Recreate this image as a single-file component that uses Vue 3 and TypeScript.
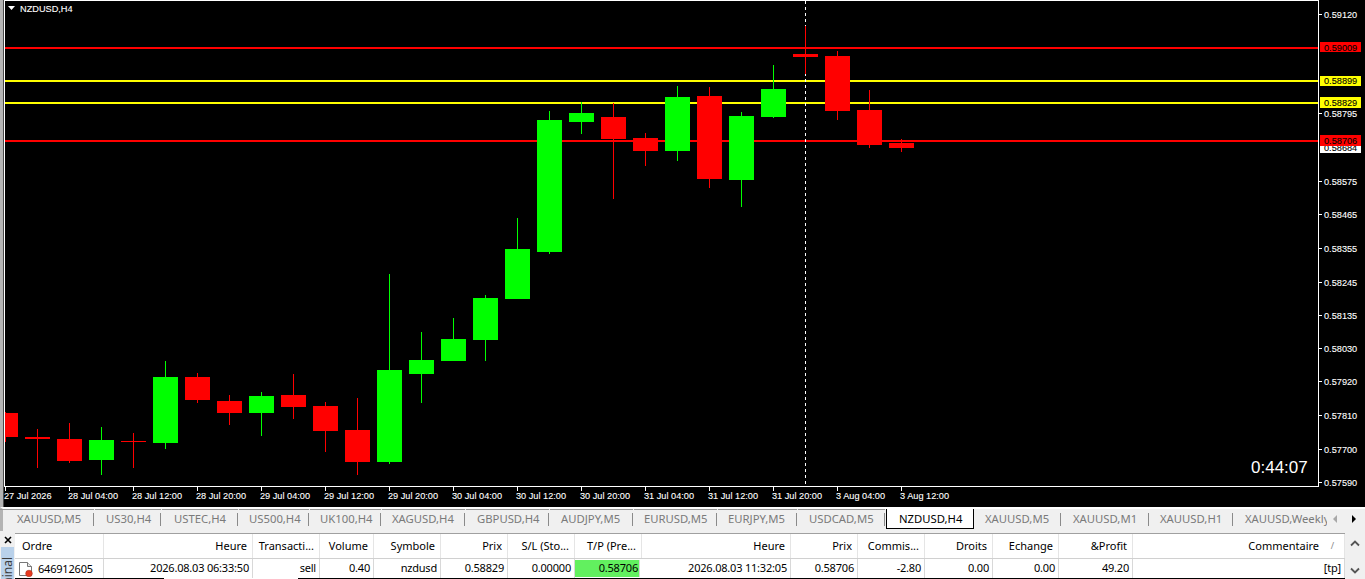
<script setup lang="ts">
interface Candle { x: number; top: number; bottom: number; high: number; low: number; up: boolean }
const raw: [number, number, number, number, boolean][] = [
  [413, 437, 412, 442, false], [437, 439, 429, 468, false], [439, 461, 423, 463, false], [440, 460, 427, 475, true],
  [441, 442, 433, 468, false], [377, 443, 361, 449, true], [377, 400, 373, 403, false], [401, 413, 395, 425, false],
  [396, 413, 392, 436, true], [395, 407, 374, 419, false], [406, 431, 402, 452, false], [430, 462, 398, 475, false],
  [370, 462, 274, 464, true], [360, 374, 332, 403, true], [339, 361, 318, 361, true], [298, 340, 295, 361, true],
  [249, 299, 218, 299, true], [120, 252, 111, 254, true], [113, 122, 102, 134, true], [117, 139, 103, 199, false],
  [138, 151, 133, 166, false], [97, 151, 86, 161, true], [96, 179, 87, 188, false], [116, 180, 112, 207, true],
  [89, 117, 65, 118, true], [54, 57, 26, 74, false], [56, 111, 51, 120, false], [110, 145, 90, 148, false],
  [143, 148, 139, 152, false],
]
const candles: Candle[] = raw.map((c, i) => ({ x: 5 + i * 32, top: c[0], bottom: c[1], high: c[2], low: c[3], up: c[4] }))

const hLines = [
  { y: 47, color: '#ff0000' }, { y: 80, color: '#ffff00' }, { y: 102, color: '#ffff00' }, { y: 140, color: '#ff0000' },
]
const priceTicks = [
  ['0.59120', 14], ['0.58795', 113], ['0.58575', 181], ['0.58465', 214], ['0.58355', 248], ['0.58245', 282],
  ['0.58135', 315], ['0.58030', 348], ['0.57920', 381], ['0.57810', 415], ['0.57700', 449], ['0.57590', 482],
] as [string, number][]
const priceTags = [
  { t: '0.58684', y: 146, h: 7, ty: 147, bg: '#ffffff' },
  { t: '0.59009', y: 42, h: 10, ty: 47, bg: '#ff0000' },
  { t: '0.58899', y: 76, h: 10, ty: 80, bg: '#ffff00' },
  { t: '0.58829', y: 97, h: 11, ty: 102, bg: '#ffff00' },
  { t: '0.58706', y: 135, h: 11, ty: 140, bg: '#ff0000' },
]
const times = ['27 Jul 2026', '28 Jul 04:00', '28 Jul 12:00', '28 Jul 20:00', '29 Jul 04:00', '29 Jul 12:00', '29 Jul 20:00',
  '30 Jul 04:00', '30 Jul 12:00', '30 Jul 20:00', '31 Jul 04:00', '31 Jul 12:00', '31 Jul 20:00', '3 Aug 04:00', '3 Aug 12:00']

const tabs = [
  { t: 'XAUUSD,M5', w: 95, pad: 17 }, { t: 'US30,H4', w: 67, pad: 11 }, { t: 'USTEC,H4', w: 77, pad: 12 },
  { t: 'US500,H4', w: 71, pad: 10 }, { t: 'UK100,H4', w: 72, pad: 10 }, { t: 'XAGUSD,H4', w: 84, pad: 10 },
  { t: 'GBPUSD,H4', w: 84, pad: 11 }, { t: 'AUDJPY,M5', w: 84, pad: 11 }, { t: 'EURUSD,M5', w: 84, pad: 10 },
  { t: 'EURJPY,M5', w: 80, pad: 10 }, { t: 'USDCAD,M5', w: 88, pad: 11 }, { t: 'NZDUSD,H4', w: 88, pad: 12, active: true },
  { t: 'XAUUSD,M5', w: 88, pad: 11 }, { t: 'XAUUSD,M1', w: 88, pad: 11 }, { t: 'XAUUSD,H1', w: 84, pad: 10 },
  { t: 'XAUUSD,Weekly', w: 94, pad: 11, last: true },
]
const activeIndex = tabs.findIndex(t => t.active)

const cols = [
  { h: 'Ordre', v: '646912605', w: 89, left: true },
  { h: 'Heure', v: '2026.08.03 06:33:50', w: 149 },
  { h: 'Transacti...', v: 'sell', w: 67 },
  { h: 'Volume', v: '0.40', w: 54 },
  { h: 'Symbole', v: 'nzdusd', w: 67 },
  { h: 'Prix', v: '0.58829', w: 67 },
  { h: 'S/L (Sto...', v: '0.00000', w: 67 },
  { h: 'T/P (Pre...', v: '0.58706', w: 67, green: true },
  { h: 'Heure', v: '2026.08.03 11:32:05', w: 149 },
  { h: 'Prix', v: '0.58706', w: 67 },
  { h: 'Commis...', v: '-2.80', w: 67 },
  { h: 'Droits', v: '0.00', w: 68 },
  { h: 'Echange', v: '0.00', w: 66 },
  { h: '&Profit', v: '49.20', w: 74 },
  { h: 'Commentaire', v: '[tp]', w: 212, sort: true },
]
const gridCols = cols.map(c => c.w + 'px').join(' ')
</script>

<template>
  <div class="screen">
    <div class="chart-wrap">
      <svg class="chart" width="1365" height="507" viewBox="0 0 1365 507" shape-rendering="crispEdges">
        <rect x="0" y="0" width="3" height="507" fill="#b4b4b4" />
        <rect x="3" y="0" width="1" height="507" fill="#4a4a4a" />
        <rect x="4.5" y="0.5" width="1314" height="486" fill="none" stroke="#ffffff" />

        <rect v-for="l in hLines" :key="l.y" x="5" :y="l.y" width="1313" height="2" :fill="l.color" />
        <line x1="805.5" y1="1" x2="805.5" y2="486" stroke="#ffffff" stroke-dasharray="3 3" />

        <g v-for="c in candles" :key="c.x">
          <rect :x="c.x" :y="c.high" width="1" :height="c.low - c.high" :fill="c.up ? '#00ff00' : '#ff0000'" />
          <rect :x="Math.max(c.x - 12, 5)" :y="c.top" :width="c.x - 12 < 5 ? 13 : 25" :height="c.bottom - c.top"
            :fill="c.up ? '#00ff00' : '#ff0000'" />
        </g>

        <path d="M8 6h7l-3.5 4z" fill="#ffffff" shape-rendering="auto" />
        <text class="lbl" x="20" y="12">NZDUSD,H4</text>

        <g v-for="p in priceTicks" :key="p[0]">
          <rect x="1319" :y="p[1]" width="3" height="1" fill="#ffffff" />
          <text class="lbl" x="1324" :y="p[1] + 4">{{ p[0] }}</text>
        </g>
        <g v-for="p in priceTags" :key="p.t">
          <rect x="1320" :y="p.y" width="41" :height="p.h" :fill="p.bg" />
          <text class="lbl dark" x="1324" :y="p.ty + 4">{{ p.t }}</text>
        </g>

        <g v-for="(t, i) in times" :key="t">
          <rect :x="5 + i * 64" y="487" width="1" height="4" fill="#ffffff" />
          <text class="lbl" :x="(i === 0 ? 4 : 4 + i * 64)" y="499">{{ t }}</text>
        </g>

        <text class="clock" x="1251" y="473">0:44:07</text>
      </svg>
    </div>

    <div class="tabbar">
      <div v-for="(t, i) in tabs" :key="i" class="tab"
        :class="{ active: t.active, last: t.last, before: i < activeIndex }"
        :style="{ width: t.w + 'px', paddingLeft: t.pad + 'px' }">{{ t.t }}</div>
      <div class="tab-arrows">
        <svg width="30" height="10" viewBox="0 0 30 10">
          <path d="M5 1v8l-4-4z" fill="#a8a8a8" />
          <path d="M20 1v8l4-4z" fill="#000000" />
        </svg>
      </div>
    </div>

    <div class="panel">
      <div class="side">
        <svg class="close" width="8" height="8" viewBox="0 0 8 8">
          <path d="M1 1l6 6M7 1l-6 6" stroke="#000" stroke-width="1.6" />
        </svg>
        <div class="vtab"><span>Terminal</span></div>
      </div>
      <div class="table">
        <div class="thead" :style="{ gridTemplateColumns: gridCols }">
          <div v-for="(c, i) in cols" :key="i" class="th" :class="{ left: c.left, sortable: c.sort }">
            {{ c.h }}<span v-if="c.sort" class="sort">/</span>
          </div>
        </div>
        <div class="trow" :style="{ gridTemplateColumns: gridCols }">
          <div v-for="(c, i) in cols" :key="i" class="td" :class="{ left: c.left, green: c.green }">
            <svg v-if="c.left" class="doc" width="16" height="16" viewBox="0 0 16 16">
              <path d="M1.5 1.5h8l4 4v9h-12z" fill="#fff" stroke="#777" shape-rendering="auto" />
              <path d="M9.5 1.5v4h4" fill="#e8e8e8" stroke="#777" shape-rendering="auto" />
              <circle cx="11" cy="12.5" r="3.3" fill="#e8391f" stroke="#a32" stroke-width=".6" />
            </svg>
            <span>{{ c.v }}</span>
          </div>
        </div>
        <div class="row-gap"></div>
      </div>
      <div class="scroll">
        <svg width="10" height="7" viewBox="0 0 10 7"><path d="M1 5.5l4-4 4 4" fill="none" stroke="#555" stroke-width="1.8" /></svg>
        <svg width="10" height="7" viewBox="0 0 10 7"><path d="M1 1.5l4 4 4-4" fill="none" stroke="#555" stroke-width="1.8" /></svg>
      </div>
    </div>
  </div>
</template>

<style>
html, body { margin: 0; padding: 0; background: #f0f0f0; overflow: hidden; }
</style>

<style scoped>
.screen {
  width: 1365px;
  height: 579px;
  display: flex;
  flex-direction: column;
  overflow: hidden;
  background: #f0f0f0;
  font-family: "Noto Sans", sans-serif;
  font-size: 11px;
  color: #000;
}
.chart-wrap { height: 507px; background: #000; flex: none; }
.chart { display: block; }
.lbl { font-family: "Liberation Sans", sans-serif; font-size: 9.2px; fill: #fff; stroke: #fff; stroke-width: 0.1px; }
.lbl.dark { fill: #000; stroke: #000; }
.clock { font-family: "Liberation Sans", sans-serif; font-size: 17px; fill: #fff; }

.tabbar {
  flex: none;
  display: flex;
  background: #f0f0f0;
  border-top: 2px solid #fff;
  box-sizing: border-box;
  height: 24px;
  border-left: 3px solid #b4b4b4;
}
.tab {
  box-sizing: border-box;
  flex: none;
  height: 20px;
  line-height: 20px;
  font-size: 11.3px;
  color: #7a7a7a;
  white-space: nowrap;
  overflow: hidden;
  border-right: 1px solid transparent;
  position: relative;
}
.tab.before { box-shadow: inset 0 1px 0 #999; }
.tab::after {
  content: "";
  position: absolute;
  right: 0;
  top: 4px;
  bottom: 3px;
  width: 1px;
  background: #8a8a8a;
}
.tab:first-child { margin-left: -3px; }
.tab.active { background: #fff; color: #000; border: 1px solid #000; border-top: 0; }
.tab.active::after, .tab.last::after { display: none; }
.tab-arrows { margin-left: 4px; padding-top: 5px; flex: none; height: 15px; }
.tab-arrows svg { display: block; }

.panel { flex: 1; display: flex; min-height: 0; padding-top: 2px; }
.side { width: 15px; flex: none; display: flex; flex-direction: column; align-items: center; }
.close { margin-top: 3px; flex: none; }
.vtab {
  margin-top: 3px;
  width: 13px;
  flex: 1;
  background: #b9d1ea;
  overflow: hidden;
  display: flex;
  justify-content: center;
  align-items: flex-start;
}
.vtab span {
  margin-top: 10px;
  writing-mode: vertical-rl;
  transform: rotate(180deg);
  color: #3c3c3c;
  font-size: 12px;
  line-height: 13px;
  flex: none;
  white-space: nowrap;
}
.table { width: 1330px; flex: none; position: relative; background: #fff; border-top: 1px solid #a0a0a0; }
.thead { display: grid; height: 24px; border-bottom: 1px solid #d0d0d0; }
.th {
  line-height: 24px;
  text-align: right;
  padding-right: 5px;
  border-right: 1px solid #e5e5e5;
  white-space: nowrap;
  overflow: hidden;
}
.th.left { text-align: left; padding-left: 7px; }
.th.sortable { padding-right: 25px; position: relative; }
.sort { position: absolute; right: 10px; top: 0; color: #888; font-size: 9px; }
.trow { display: grid; height: 20px; border-bottom: 1px solid #000; box-sizing: border-box; }
.td {
  line-height: 17px;
  text-align: right;
  padding-right: 3px;
  letter-spacing: -0.2px;
  border-right: 1px solid #d8d8d8;
  white-space: nowrap;
  overflow: hidden;
}
.td.left { display: flex; align-items: center; padding-left: 3px; gap: 4px; text-align: left; }
.td.green { background: #62f05f; margin: 1px 2px 1px 0; line-height: 15px; padding-right: 1px; }
.doc { flex: none; }
.row-gap { position: absolute; left: 149px; width: 134px; bottom: 0; height: 1px; background: #fff; }
.scroll {
  flex: 1;
  display: flex;
  flex-direction: column;
  align-items: center;
  justify-content: space-between;
  padding: 7px 0 5px;
  box-sizing: border-box;
}
.scroll svg { display: block; }
</style>
